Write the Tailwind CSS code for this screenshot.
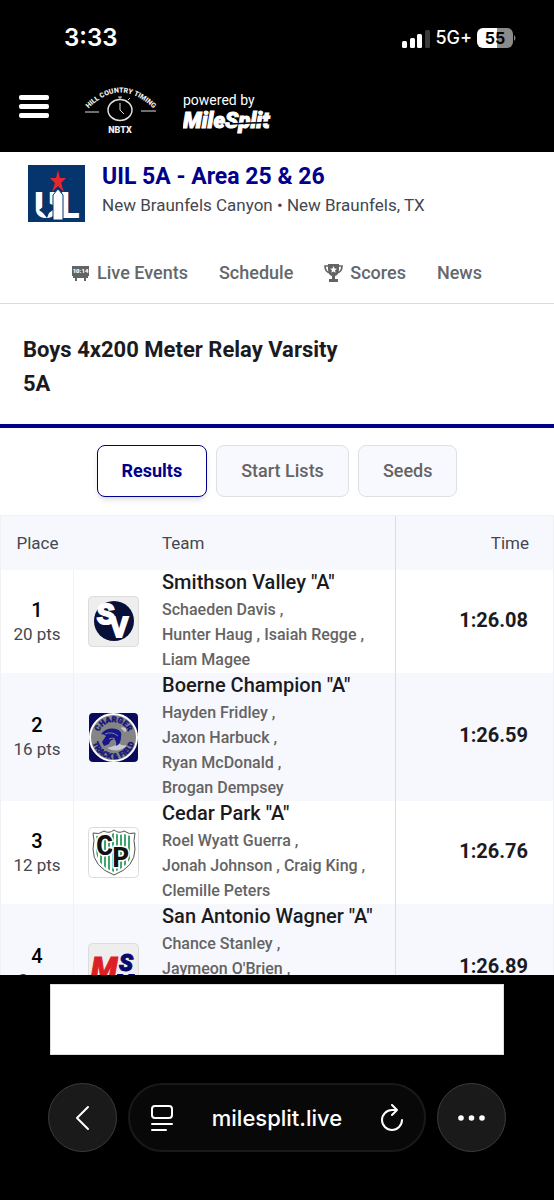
<!DOCTYPE html>
<html lang="en">

<head>
    <meta charset="UTF-8">
    <meta name="viewport" content="width=device-width, initial-scale=1.0">
    <title>UIL 5A - Area 25 &amp; 26</title>
    <script src="https://cdn.jsdelivr.net/npm/@tailwindcss/browser@4"></script>
</head>

<body class="flex flex-col h-screen bg-black font-['Roboto',sans-serif]">
    <!-- Status bar -->
    <div class="flex items-center justify-between pt-5 pl-16 pr-[38px] text-white font-['Inter',sans-serif]">
        <span class="text-[24px] leading-9 font-semibold">3:33</span>
        <div class="flex items-center gap-[5px]">
            <svg class="w-7 h-[19px]" viewBox="0 0 28 19" fill="#fff" aria-hidden="true">
                <rect x="0" y="12" width="5" height="7" rx="1.5" />
                <rect x="8" y="9" width="5" height="10" rx="1.5" />
                <rect x="15" y="5" width="5" height="14" rx="1.5" />
                <rect x="23" y="1" width="5" height="18" rx="1.5" fill="#3a3a3a" />
            </svg>
            <span class="text-[18px] leading-6 font-medium">5G+</span>
            <svg class="w-[39px] h-5" viewBox="0 0 39 20" aria-label="Battery 55%">
                <path d="M6 0h14v20H6a6 6 0 0 1-6-6V6a6 6 0 0 1 6-6z" fill="#fff" />
                <path d="M20 0h10a6 6 0 0 1 6 6v8a6 6 0 0 1-6 6H20z" fill="#8a8a8a" />
                <path d="M37 7q3 3 0 6z" fill="#8a8a8a" />
                <text x="18" y="16" text-anchor="middle" font-family="Inter" font-size="16" font-weight="700" fill="#000">55</text>
            </svg>
        </div>
    </div>

    <!-- Site header -->
    <header class="flex items-center h-24 pl-[19px] text-white">
        <button type="button" aria-label="Menu" class="w-[30px] h-6 mt-[5px]">
            <svg viewBox="0 0 30 24" fill="#fff">
                <rect x="0" y="0" width="30" height="5" rx="2" />
                <rect x="0" y="9" width="30" height="5" rx="2" />
                <rect x="0" y="18" width="30" height="5" rx="2" />
            </svg>
        </button>
        <svg class="w-[74px] h-[50px] ml-[35px] mt-3" viewBox="0 0 74 50" fill="none" stroke="#ddd" aria-label="Hill Country Timing NBTX">
            <path id="arc" d="M5 23Q36 -8 69 23" stroke="none" />
            <text font-family="Roboto" font-weight="900" font-size="7" fill="#eee" stroke="none" text-anchor="middle">
                <textPath href="#arc" startOffset="50%">HILL COUNTRY TIMING</textPath>
            </text>
            <path d="M1 27h14M57 26h15" />
            <ellipse cx="36" cy="25" rx="12" ry="10.5" stroke-width="1.5" />
            <path d="M36 18v7l4 4M34 12h4M36 12v2M44 15l2-2" />
            <text x="36" y="48" font-family="Roboto" font-weight="900" font-size="9" fill="#eee" stroke="none" text-anchor="middle">NBTX</text>
        </svg>
        <div class="ml-[25px] mt-4">
            <p class="text-[14px] leading-5">powered by</p>
            <svg class="w-[94px] h-6" viewBox="0 0 94 24" aria-label="MileSplit">
                <text x="0" y="18" font-family="Roboto" font-weight="900" font-style="italic" font-size="22" fill="#fff" stroke="#fff">MileSplit</text>
                <path d="M47 14l45-2" stroke="#000" stroke-width="1.5" />
            </svg>
        </div>
    </header>

    <main class="flex-1 min-h-0 overflow-y-auto [scrollbar-width:none] bg-white text-[#1b1b1f]">
        <!-- Meet -->
        <section class="border-b border-[#dcdce0]">
            <div class="flex gap-[17px] pt-[13px] pl-7">
                <svg class="w-[57px] h-[57px]" viewBox="0 0 57 57" aria-label="UIL">
                    <rect width="57" height="57" fill="#06356d" />
                    <g fill="#fff" font-family="Roboto" font-weight="900" font-size="36">
                        <text x="6" y="53">U</text>
                        <text x="32" y="53">L</text>
                    </g>
                    <path d="M25 55V30l5-6 5 6v25z" fill="#fff" stroke="#06356d" />
                    <path d="M15 30h5v8l5 2v5l-4 3-2 5-4-5-4-3 4-3z" fill="#06356d" />
                    <path d="M30 5l2 8h6l-5 5 3 9-6-6-6 6 3-9-5-5h6z" fill="#e8262e" />
                </svg>
                <div>
                    <h1 class="text-[23px] leading-6 font-bold text-[#00008b]">UIL 5A - Area 25 &amp; 26</h1>
                    <p class="mt-1 text-[17px] leading-6 text-[#44474e]">New Braunfels Canyon • New Braunfels, TX</p>
                </div>
            </div>
            <nav class="flex justify-center gap-[31px] pt-[39px] pb-[18px] text-[18px] leading-6 font-medium text-[#64686c]">
                <a href="#" class="flex items-center gap-2">
                    <svg class="w-[17px] h-[15px]" viewBox="0 0 17 15" fill="#646464" aria-hidden="true">
                        <rect x="0" y="0" width="17" height="10" />
                        <path d="M1 10h15v2H1zM3 12h2v3H3zM12 12h2v3h-2z" />
                        <text x="8.5" y="7" font-family="Roboto" font-size="6" font-weight="900" fill="#fff" text-anchor="middle">10:14</text>
                    </svg>
                    Live Events</a>
                <a href="#">Schedule</a>
                <a href="#" class="flex items-center gap-[7px]">
                    <svg class="w-[19px] h-[18px]" viewBox="0 0 19 18" fill="none" stroke="#646464" stroke-width="1.6" aria-hidden="true">
                        <path d="M4 0h11v5q0 6-4 7v3h3v3H5v-3h3v-3q-4-1-4-7z" fill="#646464" stroke="none" />
                        <path d="M5 2H1q0 6 5 7M14 2h4q0 6-5 7" />
                        <path d="M9.500 2l1 2.500 2.500.2-2 1.600.7 2.500-2.200-1.400-2.200 1.400.7-2.500-2-1.600 2.500-.2z" fill="#fff" stroke="none" />
                    </svg>
                    Scores</a>
                <a href="#">News</a>
            </nav>
        </section>

        <!-- Event -->
        <section class="pt-[29px] pb-[23px] pl-[23px] pr-48 border-b-4 border-[#00008b]">
            <h2 class="text-[22px] leading-[34px] font-bold">Boys 4x200 Meter Relay Varsity 5A</h2>
        </section>

        <div class="flex justify-center gap-[9px] pt-[17px] pb-[18px] text-[18px] leading-6 font-medium">
            <button type="button" class="px-6 py-[13px] border border-[#00008b] rounded-lg bg-white text-[#00008b] font-bold shadow-md shadow-black/10">Results</button>
            <button type="button" class="px-6 py-[13px] border border-[#dfe0e3] rounded-lg bg-[#f8f9fe] text-[#646464]">Start Lists</button>
            <button type="button" class="px-6 py-[13px] border border-[#dfe0e3] rounded-lg bg-[#f8f9fe] text-[#646464]">Seeds</button>
        </div>

        <!-- Results -->
        <table class="w-full border-x border-t border-[#f0f1f4] border-separate border-spacing-0 text-[17px] leading-6 text-[#44474e]">
            <thead class="bg-[#f7f8fd]">
                <tr>
                    <th class="w-[73px] h-[54px] p-0 font-normal">Place</th>
                    <th class="w-[88px]"></th>
                    <th class="p-0 text-left font-normal">Team</th>
                    <th class="w-[158px] p-0 pr-6 text-right font-normal border-l border-[#dddee2]">Time</th>
                </tr>
            </thead>
            <tbody>
                <tr>
                    <td class="p-0 text-center border-r border-[#f0f1f4]"><strong class="block text-[20px] font-medium text-black">1</strong>20 pts</td>
                    <td class="p-0 pl-[14px]">
                        <svg class="w-[51px] h-[51px]" viewBox="0 0 51 51" aria-label="Smithson Valley">
                            <rect x=".5" y=".5" width="50" height="50" rx="4" fill="#eee" stroke="#dcdcdc" />
                            <circle cx="26" cy="25" r="20" fill="#08103a" />
                            <g fill="#fff" stroke="#fff" stroke-width="2" font-family="Liberation Mono" font-weight="700" font-size="30">
                                <text x="9" y="28">S</text>
                                <text x="22" y="41">V</text>
                            </g>
                        </svg>
                    </td>
                    <td class="p-0 pr-4 pb-px">
                        <h3 class="mb-[3px] text-[20px] font-medium text-[#1b1b1f]">Smithson Valley "A"</h3>
                        <p class="text-[16px] leading-[25px] font-medium text-[#646464]">
                            <span class="whitespace-nowrap">Schaeden Davis ,</span>
                            <span class="whitespace-nowrap">Hunter Haug ,</span>
                            <span class="whitespace-nowrap">Isaiah Regge ,</span>
                            <span class="whitespace-nowrap">Liam Magee</span>
                        </p>
                    </td>
                    <td class="p-0 pr-[25px] pb-1 text-right text-[20px] font-bold text-[#1b1b1f] border-l border-[#dddee2]">1:26.08</td>
                </tr>
                <tr class="bg-[#f7f8fd]">
                    <td class="p-0 text-center border-r border-[#f0f1f4]"><strong class="block text-[20px] font-medium text-black">2</strong>16 pts</td>
                    <td class="p-0 pl-[14px]">
                        <svg class="w-[51px] h-[51px]" viewBox="0 0 51 51" aria-label="Charger Track &amp; Field">
                            <rect x="1" y="1" width="49" height="49" rx="4" fill="#0a0a5c" />
                            <circle cx="25.500" cy="25.500" r="23.500" fill="#858585" stroke="#fff" stroke-width="2" />
                            <path id="top" d="M10 25.500a15.500 15.500 0 0 1 31 0" fill="none" />
                            <path id="low" d="M4 25.500a21.500 21.500 0 0 0 43 0" fill="none" />
                            <g font-family="Roboto" font-weight="900" font-size="8" fill="#17177a" stroke="#17177a" stroke-width=".4" text-anchor="middle">
                                <text><textPath href="#top" startOffset="50%">CHARGER</textPath></text>
                                <text><textPath href="#low" startOffset="50%">TRACK &amp; FIELD</textPath></text>
                            </g>
                            <path d="M33 16q7-1 4 4M20 36q9 5 18-2-5 0-7-2" fill="#c9c9d4" stroke="#c9c9d4" />
                            <path d="M13 22q6-7 15-5 7 2 5 8 0 7-5 9 1-5-2-7-4 1-5 5l-5 2-2-4 4-6q-2-2-5-2z" fill="#17178a" />
                            <path d="M17 22q7-3 13 2M21 27q4-2 6 0" stroke="#858585" fill="none" />
                        </svg>
                    </td>
                    <td class="p-0 pr-4 pb-px">
                        <h3 class="mb-[3px] text-[20px] font-medium text-[#1b1b1f]">Boerne Champion "A"</h3>
                        <p class="text-[16px] leading-[25px] font-medium text-[#646464]">
                            <span class="whitespace-nowrap">Hayden Fridley ,</span>
                            <span class="whitespace-nowrap">Jaxon Harbuck ,</span>
                            <span class="whitespace-nowrap">Ryan McDonald ,</span>
                            <span class="whitespace-nowrap">Brogan Dempsey</span>
                        </p>
                    </td>
                    <td class="p-0 pr-[25px] pb-1 text-right text-[20px] font-bold text-[#1b1b1f] border-l border-[#dddee2]">1:26.59</td>
                </tr>
                <tr>
                    <td class="p-0 text-center border-r border-[#f0f1f4]"><strong class="block text-[20px] font-medium text-black">3</strong>12 pts</td>
                    <td class="p-0 pl-[14px]">
                        <svg class="w-[51px] h-[51px]" viewBox="0 0 51 51" aria-label="Cedar Park">
                            <defs>
                                <pattern id="stripes" width="4" height="4" patternUnits="userSpaceOnUse">
                                    <rect width="4" height="4" fill="#fff" />
                                    <rect width="2" height="4" fill="#3fa56c" />
                                </pattern>
                            </defs>
                            <rect x=".5" y=".5" width="50" height="50" rx="4" fill="#fff" stroke="#dcdcdc" />
                            <path d="M5 6q6 2 11-2 5 3 10-1 5 4 10 1 5 4 11 2-2 7 0 16 0 18-21 26Q5 40 5 22q2-9 0-16z" fill="#fff" stroke="#555" />
                            <path d="M8 9q5 0 8-2 5 2 10-1 5 3 10 1 4 2 8 2-2 6 0 13 0 16-18 23Q8 38 8 22q2-7 0-13z" fill="url(#stripes)" />
                            <g fill="#111" stroke="#fff" stroke-width="3" paint-order="stroke" font-family="Liberation Mono" font-weight="700" font-size="29">
                                <text x="8" y="28">C</text>
                                <text x="24" y="40">P</text>
                            </g>
                        </svg>
                    </td>
                    <td class="p-0 pr-4 pb-px">
                        <h3 class="mb-[3px] text-[20px] font-medium text-[#1b1b1f]">Cedar Park "A"</h3>
                        <p class="text-[16px] leading-[25px] font-medium text-[#646464]">
                            <span class="whitespace-nowrap">Roel Wyatt Guerra ,</span>
                            <span class="whitespace-nowrap">Jonah Johnson ,</span>
                            <span class="whitespace-nowrap">Craig King ,</span>
                            <span class="whitespace-nowrap">Clemille Peters</span>
                        </p>
                    </td>
                    <td class="p-0 pr-[25px] pb-1 text-right text-[20px] font-bold text-[#1b1b1f] border-l border-[#dddee2]">1:26.76</td>
                </tr>
                <tr class="h-32 bg-[#f7f8fd]">
                    <td class="p-0 text-center border-r border-[#f0f1f4]"><strong class="block text-[20px] font-medium text-black">4</strong>8 pts</td>
                    <td class="p-0 pl-[14px]">
                        <svg class="w-[51px] h-[51px]" viewBox="0 0 51 51" aria-label="MileSplit">
                            <rect x=".5" y=".5" width="50" height="50" rx="4" fill="#eee" stroke="#dcdcdc" />
                            <g font-family="Roboto" font-weight="900" font-style="italic">
                                <text x="3" y="36" font-size="31" fill="#dc1f26" stroke="#dc1f26">M</text>
                                <text x="31" y="28" font-size="23" fill="#07076e" stroke="#07076e">S</text>
                            </g>
                            <path d="M29 31h6l2 3 4-3h6l-5 14H30z" fill="#07076e" />
                        </svg>
                    </td>
                    <td class="p-0 pr-4 pb-px align-top">
                        <h3 class="mb-[3px] text-[20px] font-medium text-[#1b1b1f]">San Antonio Wagner "A"</h3>
                        <p class="text-[16px] leading-[25px] font-medium text-[#646464]">
                            <span class="whitespace-nowrap">Chance Stanley ,</span>
                            <span class="whitespace-nowrap">Jaymeon O'Brien ,</span>
                        </p>
                    </td>
                    <td class="p-0 pr-[25px] pb-1 text-right text-[20px] font-bold text-[#1b1b1f] border-l border-[#dddee2]">1:26.89</td>
                </tr>
            </tbody>
        </table>
    </main>

    <!-- Ad slot -->
    <div class="mt-[9px] mx-[50px] h-[71px] bg-white border border-[#ddd]"></div>

    <!-- Browser toolbar -->
    <footer class="flex gap-[11px] px-12 pt-7 pb-12 text-white">
        <button type="button" aria-label="Back" class="flex items-center justify-center size-[69px] shrink-0 rounded-full bg-[#1a1a1a] border border-[#3c3c3c]">
            <svg class="w-4 h-[26px]" viewBox="0 0 16 26" fill="none" stroke="#fff" stroke-width="2" stroke-linecap="round" stroke-linejoin="round">
                <path d="M13 2L2 13l11 11" />
            </svg>
        </button>
        <div class="flex flex-1 items-center justify-between px-5 rounded-full bg-[#080808] border-2 border-[#191919]">
            <button type="button" aria-label="Page menu">
                <svg class="w-6 h-[28px]" viewBox="0 0 24 28" fill="none" stroke="#fff" stroke-width="2" stroke-linecap="round">
                    <rect x="2" y="2" width="20" height="12" rx="3" />
                    <path d="M2 20h20M2 26h14" />
                </svg>
            </button>
            <span class="text-[22px] leading-7 font-medium font-['Inter',sans-serif]">milesplit.live</span>
            <button type="button" aria-label="Reload">
                <svg class="w-6 h-[28px]" viewBox="0 0 24 28" fill="none" stroke="#fff" stroke-width="2" stroke-linecap="round" stroke-linejoin="round">
                    <path d="M22 16A10 10 0 1 1 12 6h5M12 1l5 5-5 5" />
                </svg>
            </button>
        </div>
        <button type="button" aria-label="More" class="flex items-center justify-center size-[69px] shrink-0 rounded-full bg-[#1a1a1a] border border-[#3c3c3c]">
            <svg class="w-[27px] h-[6px]" viewBox="0 0 27 6" fill="#fff">
                <circle cx="3" cy="3" r="2.800" />
                <circle cx="13.500" cy="3" r="2.800" />
                <circle cx="24" cy="3" r="2.800" />
            </svg>
        </button>
    </footer>
</body>

</html>
